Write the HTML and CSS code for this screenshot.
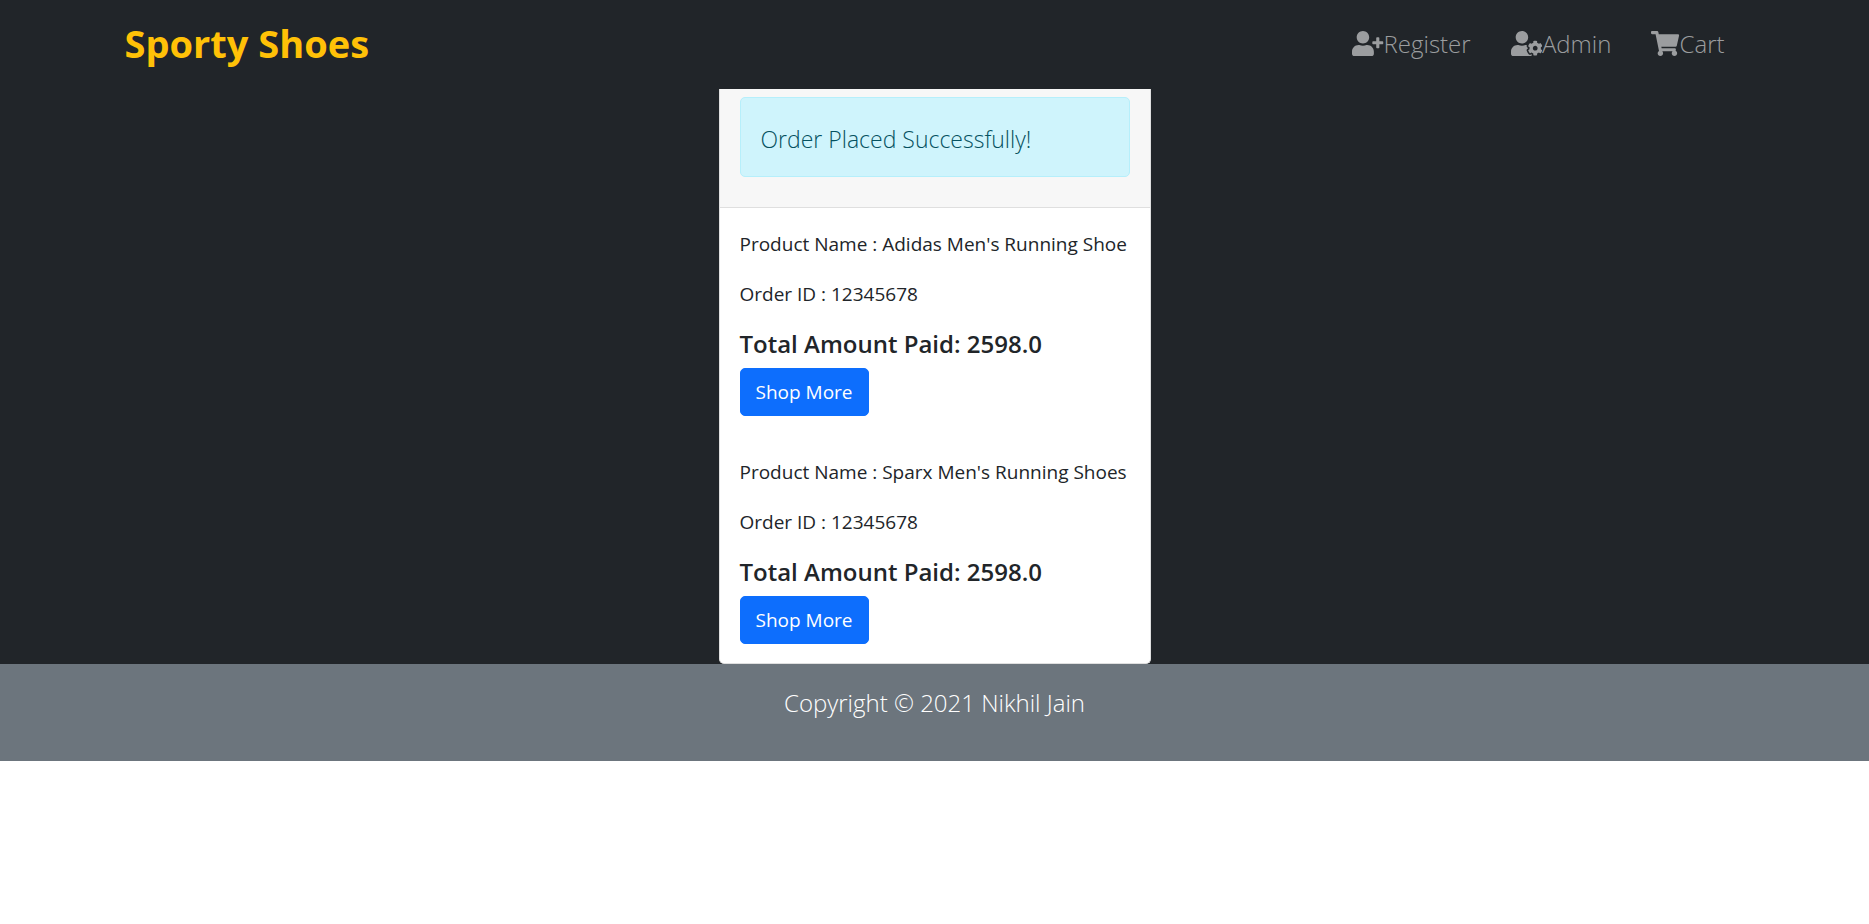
FILE: index.html
```html
<!DOCTYPE html>
<html lang="en">
<head>
<meta charset="utf-8">
<title>Sporty Shoes</title>
<link rel="stylesheet" href="styles.css">
</head>
<body>
<header class="navbar">
  <div class="container">
    <a class="brand" href="#">Sporty Shoes</a>
    <nav class="nav">
      <a class="nav-link" href="#"><svg class="icon" viewBox="0 0 640 512" aria-hidden="true"><path d="M624 208h-64v-64c0-8.800-7.200-16-16-16h-32c-8.800 0-16 7.200-16 16v64h-64c-8.800 0-16 7.200-16 16v32c0 8.800 7.200 16 16 16h64v64c0 8.800 7.200 16 16 16h32c8.800 0 16-7.200 16-16v-64h64c8.800 0 16-7.200 16-16v-32c0-8.800-7.200-16-16-16zm-400 48c70.700 0 128-57.300 128-128S294.700 0 224 0 96 57.300 96 128s57.300 128 128 128zm89.600 32h-16.700c-22.200 10.200-46.900 16-72.900 16s-50.600-5.800-72.900-16h-16.700C60.200 288 0 348.200 0 422.400V464c0 26.500 21.500 48 48 48h352c26.500 0 48-21.500 48-48v-41.600c0-74.200-60.200-134.400-134.400-134.400z"/></svg>Register</a>
      <a class="nav-link" href="#"><svg class="icon" viewBox="0 0 640 512" aria-hidden="true"><path d="M610.500 373.300c2.600-14.100 2.600-28.500 0-42.600l25.800-14.900c3-1.700 4.300-5.200 3.300-8.500-6.700-21.600-18.200-41.200-33.200-57.400-2.300-2.500-6-3.100-9-1.400l-25.800 14.900c-10.900-9.300-23.400-16.500-36.900-21.300v-29.800c0-3.400-2.400-6.400-5.700-7.100-22.300-5-45-4.800-66.200 0-3.300.7-5.700 3.700-5.700 7.100v29.800c-13.500 4.800-26 12-36.900 21.300l-25.800-14.900c-2.900-1.700-6.700-1.100-9 1.400-15 16.200-26.500 35.800-33.200 57.400-1 3.300.4 6.800 3.300 8.500l25.800 14.900c-2.600 14.100-2.600 28.500 0 42.600l-25.800 14.900c-3 1.700-4.300 5.200-3.300 8.500 6.700 21.600 18.200 41.100 33.200 57.400 2.300 2.500 6 3.100 9 1.400l25.800-14.900c10.900 9.300 23.400 16.500 36.900 21.300v29.800c0 3.400 2.400 6.400 5.700 7.100 22.300 5 45 4.800 66.200 0 3.300-.7 5.700-3.700 5.700-7.100v-29.800c13.500-4.800 26-12 36.900-21.300l25.800 14.900c2.900 1.700 6.700 1.100 9-1.400 15-16.200 26.500-35.800 33.200-57.400 1-3.300-.4-6.800-3.300-8.500l-25.800-14.900zM496 400.500c-26.800 0-48.500-21.800-48.500-48.500s21.800-48.500 48.500-48.500 48.500 21.800 48.500 48.500-21.700 48.500-48.500 48.500zM224 256c70.700 0 128-57.300 128-128S294.700 0 224 0 96 57.300 96 128s57.300 128 128 128zm201.200 226.500c-2.300-1.200-4.600-2.600-6.800-3.900l-7.900 4.600c-6 3.400-12.800 5.300-19.600 5.300-10.900 0-21.400-4.600-28.900-12.600-18.300-19.800-32.300-43.900-40.200-69.600-5.500-17.700 1.900-36.400 17.900-45.700l7.900-4.600c-.1-2.600-.1-5.200 0-7.800l-7.900-4.600c-16-9.200-23.400-28-17.900-45.700.9-2.900 2.200-5.800 3.200-8.700-3.800-.3-7.500-1.200-11.400-1.200h-16.700c-22.200 10.200-46.900 16-72.900 16s-50.600-5.800-72.900-16h-16.700C60.200 288 0 348.200 0 422.400V464c0 26.500 21.500 48 48 48h352c10.100 0 19.500-3.200 27.200-8.500-1.200-3.800-2-7.700-2-11.800v-9.200z"/></svg>Admin</a>
      <a class="nav-link" href="#"><svg class="icon" viewBox="0 0 576 512" aria-hidden="true"><path d="M528.120 301.319l47.273-208C578.806 78.301 567.391 64 551.990 64H159.208l-9.166-44.810C147.758 8.021 137.930 0 126.529 0H24C10.745 0 0 10.745 0 24v16c0 13.255 10.745 24 24 24h69.883l70.248 343.435C147.325 417.100 136 435.222 136 456c0 30.928 25.072 56 56 56s56-25.072 56-56c0-15.674-6.447-29.835-16.824-40h209.647C430.447 426.165 424 440.326 424 456c0 30.928 25.072 56 56 56s56-25.072 56-56c0-22.172-12.888-41.332-31.579-50.405l5.517-24.276c3.413-15.018-8.002-29.319-23.403-29.319H218.117l-6.545-32h293.145c11.206 0 20.920-7.754 23.403-18.681z"/></svg>Cart</a>
    </nav>
  </div>
</header>
<main class="page">
  <section class="card">
    <div class="card-header">
      <div class="alert" role="alert">Order Placed Successfully!</div>
    </div>
    <article class="order">
      <p class="line">Product Name : Adidas Men's Running Shoe</p>
      <p class="line">Order ID : 12345678</p>
      <h2 class="total">Total Amount Paid: 2598.0</h2>
      <button class="btn" type="button">Shop More</button>
    </article>
    <article class="order">
      <p class="line">Product Name : Sparx Men's Running Shoes</p>
      <p class="line">Order ID : 12345678</p>
      <h2 class="total">Total Amount Paid: 2598.0</h2>
      <button class="btn" type="button">Shop More</button>
    </article>
  </section>
</main>
<footer class="footer">Copyright © 2021 Nikhil Jain</footer>
</body>
</html>
```
FILE: styles.css
```css
* {
  box-sizing: border-box;
}

body {
  margin: 0;
  background: #fff;
  color: #212529;
  font-family: "Open Sans", "Noto Sans", sans-serif;
  font-size: 19px;
  line-height: 30px;
}

.navbar {
  background: #212529;
  padding: 8px 0 12px;
}

.container {
  display: flex;
  align-items: center;
  justify-content: space-between;
  max-width: 1650px;
  min-height: 69px;
  margin: 0 auto;
  padding: 0 15px;
}

.brand {
  color: #ffc107;
  font-size: 38px;
  font-weight: 700;
  line-height: 60px;
  text-decoration: none;
}

.nav {
  display: flex;
}

.nav-link {
  display: flex;
  align-items: center;
  padding: 12px 20px 10px;
  color: #9b9d9f;
  font-size: 24px;
  font-weight: 300;
  line-height: 38px;
  text-decoration: none;
}

.icon {
  height: 25px;
  fill: currentColor;
}

.page {
  display: flex;
  justify-content: center;
  background: #212529;
}

.card {
  min-width: 432px;
  background: #fff;
  border: 1px solid #dfdfdf;
  border-top: 0;
  border-radius: 0 0 5px 5px;
}

.card-header {
  padding: 8px 20px 30px;
  background: #f7f7f7;
  border-bottom: 1px solid #dfdfdf;
}

.alert {
  padding: 22px 20px 18px;
  border: 1px solid #b6effb;
  border-radius: 5px;
  background: #cff4fc;
  color: #055160;
  font-size: 23px;
  font-weight: 300;
  line-height: 38px;
}

.order {
  padding: 21px 20px 20px;
}

.order:last-child {
  padding-bottom: 19px;
}

.line {
  margin: 0 0 20px;
}

.total {
  margin: 0 0 9px;
  font-size: 24px;
  font-weight: 600;
  line-height: 30px;
}

.btn {
  display: block;
  padding: 8px 15px;
  border: 1px solid #0d6efd;
  border-radius: 5px;
  background: #0d6efd;
  color: #fff;
  font: inherit;
}

.footer {
  padding: 20px 20px 39px;
  background: #6c757d;
  color: #fff;
  font-size: 24px;
  font-weight: 300;
  line-height: 38px;
  text-align: center;
}
```
